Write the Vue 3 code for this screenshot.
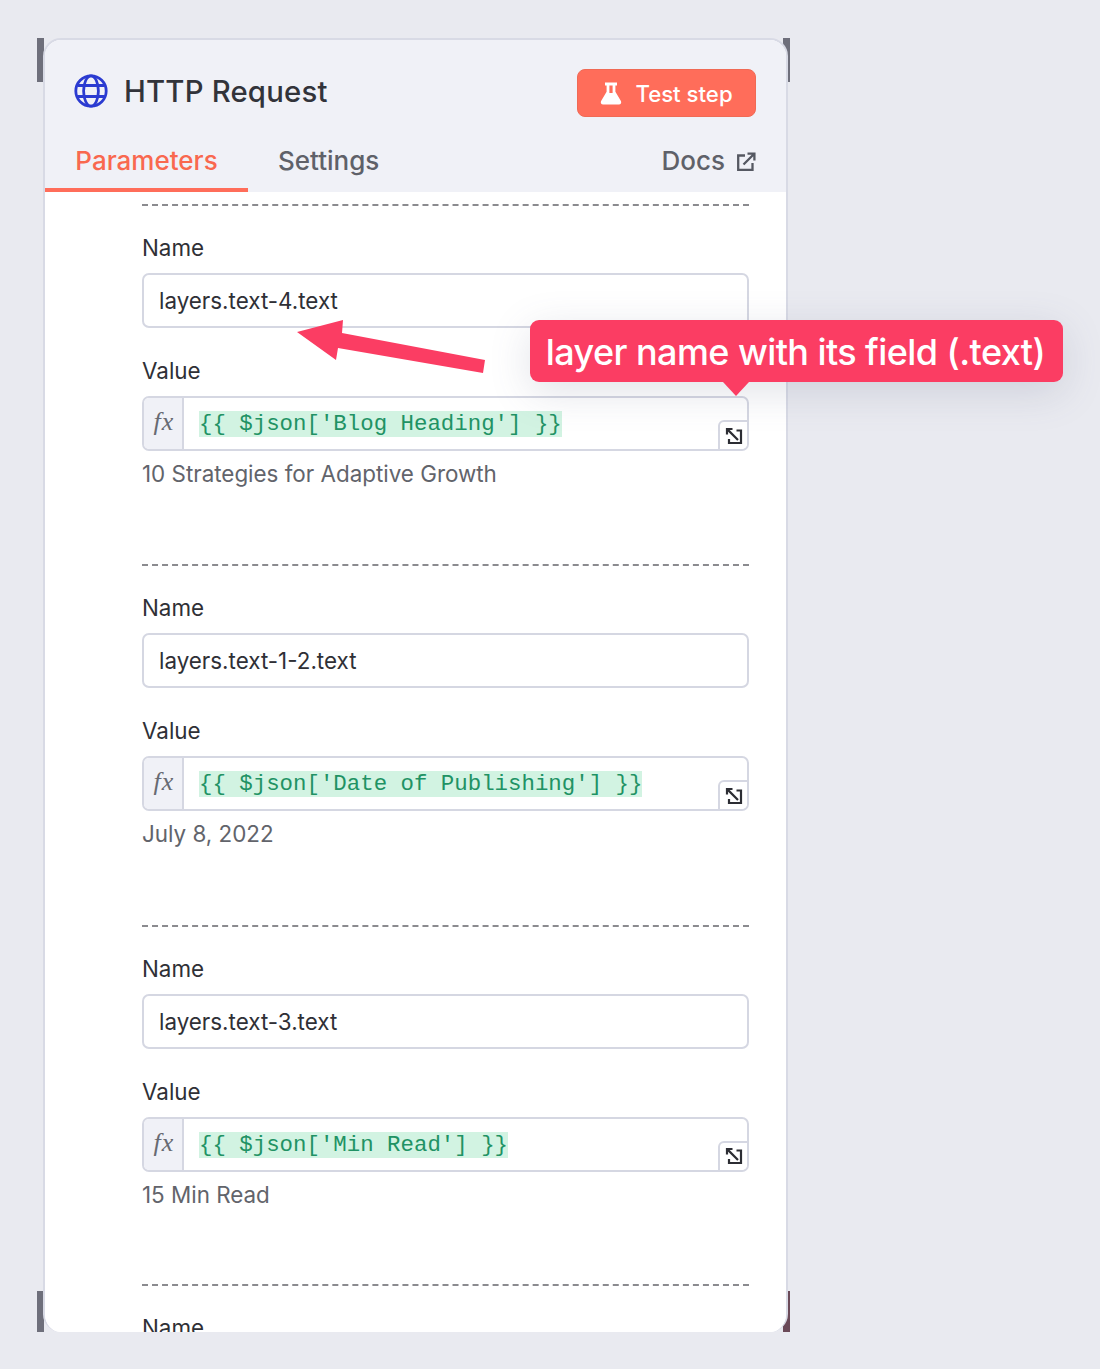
<script setup>
const sections = [
  { name: 'layers.text-4.text', value: "{{ $json['Blog Heading'] }}", hint: '10 Strategies for Adaptive Growth' },
  { name: 'layers.text-1-2.text', value: "{{ $json['Date of Publishing'] }}", hint: 'July 8, 2022' },
  { name: 'layers.text-3.text', value: "{{ $json['Min Read'] }}", hint: '15 Min Read' },
]
</script>

<template>
  <div class="page">
    <div class="frame">
      <span class="corner tl"></span>
      <span class="corner tr"></span>
      <span class="corner bl"></span>
      <span class="corner br"></span>
      <div class="card">
        <header class="head">
          <div class="title-row">
            <div class="title">
              <svg class="globe" width="34" height="34" viewBox="0 0 34 34" fill="none" stroke="#2b3bd1" stroke-width="2.8">
                <circle cx="17" cy="17" r="15.2" />
                <ellipse cx="17" cy="17" rx="7.4" ry="15.2" />
                <path d="M3.6 11.5h26.8M3.6 22.500h26.800" />
              </svg>
              <h1>HTTP Request</h1>
            </div>
            <button class="test">
              <svg width="22" height="24" viewBox="0 0 22 24" fill="#fff">
                <path fill-rule="evenodd" d="M5 1.500h12v3h-1.600v6.200l5.500 9.200c.9 1.600-.2 3.600-2 3.600H3.100c-1.800 0-2.900-2-2-3.600l5.500-9.200V4.500H5zM9.400 4.500v7.500h3.200V4.500z" />
              </svg>
              <span>Test step</span>
            </button>
          </div>
          <nav class="tabs">
            <a class="tab active">Parameters</a>
            <a class="tab">Settings</a>
            <a class="docs">
              <span>Docs</span>
              <svg class="ext" width="20" height="20" viewBox="0 0 20 20" fill="none" stroke="#555862" stroke-width="2.300">
                <path d="M9 3.500H2.200v14.300h14.300V11M7.500 12.500 18 2M11.500 1.600h6.900v6.900" />
              </svg>
            </a>
          </nav>
        </header>
        <main class="body">
          <section v-for="s in sections" :key="s.name" class="section">
            <label>Name</label>
            <div class="input">{{ s.name }}</div>
            <label class="value-label">Value</label>
            <div class="expr">
              <span class="fx">fx</span>
              <div class="code"><code>{{ s.value }}</code></div>
              <span class="expand">
                <svg width="18" height="18" viewBox="0 0 18 18" fill="none" stroke="#2c2d33" stroke-width="2.200">
                  <path d="M2 7.500V2h5.500M2.400 2.400 13 13M11.500 3.500H16v12.500H4v-4" />
                </svg>
              </span>
            </div>
            <p class="hint">{{ s.hint }}</p>
          </section>
          <section class="section"><label>Name</label></section>
        </main>
      </div>
      <svg class="arrow" width="192" height="56" viewBox="0 0 192 56">
        <path fill="#fb3d63" d="M2 14 48 2l-1 13 143 27-2 13-145-25-2 12z" />
      </svg>
      <div class="callout">layer name with its field (.text)</div>
    </div>
  </div>
</template>

<style>
html, body { margin: 0; background: #e9eaf0; }
</style>

<style scoped>
.page {
  height: 1369px;
  box-sizing: border-box;
  padding: 38px 0 0 43px;
  background: #e9eaf0;
  font-family: Inter, "Liberation Sans", sans-serif;
  overflow: hidden;
}
.frame { position: relative; width: 745px; height: 1294px; }
.corner { position: absolute; width: 7px; height: 44px; background: #6e6f7b; }
.corner.tl { left: -6px; top: 0; }
.corner.tr { right: -2px; top: 0; }
.corner.bl { left: -6px; bottom: 0; height: 41px; }
.corner.br { right: -2px; bottom: 0; height: 41px; background: #6b4a58; }
.card {
  position: relative;
  box-sizing: border-box;
  width: 745px;
  height: 1294px;
  overflow: hidden;
  background: #fff;
  border: 2px solid #d8dae5;
  border-bottom: none;
  border-radius: 18px;
}
.head { height: 152px; background: #f0f1f7; box-sizing: border-box; }
.title-row {
  display: flex;
  justify-content: space-between;
  align-items: flex-start;
  padding: 29px 30px 0 29px;
  height: 79px;
  box-sizing: border-box;
}
.title { display: flex; align-items: center; gap: 16px; height: 44px; }
.globe { flex: none; margin-top: -1px; }
h1 { margin: 0; font-size: 29.300px; font-weight: 500; color: #32333a; letter-spacing: 0.2px; }
.test {
  display: flex;
  align-items: center;
  justify-content: center;
  gap: 13px;
  width: 179px;
  height: 48px;
  padding: 0;
  border: 1px solid #f06a55;
  border-radius: 8px;
  background: #ff6d5a;
  color: #fff;
  font: 500 22.200px Inter, sans-serif;
}
.tabs { display: flex; align-items: stretch; height: 73px; padding-right: 30px; }
.tab {
  box-sizing: border-box;
  display: flex;
  align-items: center;
  justify-content: center;
  height: 73px;
  padding-top: 10px;
  font-size: 26px;
  font-weight: 500;
  color: #5f6169;
}
.tab.active {
  width: 203px;
  padding-top: 14px;
  color: #f9684f;
  border-bottom: 4px solid #ff6d5a;
}
.tab:not(.active) { margin-left: 30px; }
.docs {
  margin-left: auto;
  display: flex;
  align-items: center;
  gap: 11px;
  height: 73px;
  padding-top: 10px;
  box-sizing: border-box;
  font-size: 26px;
  font-weight: 500;
  color: #5f6169;
}
.ext { margin-top: 3px; }
.body { padding: 0 37px 0 97px; background: #fff; }
.section {
  border-top: 2px dashed #8b8b8f;
  padding-top: 27px;
  height: 360.400px;
  box-sizing: border-box;
}
.section:first-child { margin-top: 12px; }
.section:nth-child(3) { height: 359.600px; }
label { display: block; font-size: 22.400px; line-height: 30px; color: #2f3036; }
.input {
  margin-top: 10px;
  box-sizing: border-box;
  height: 55px;
  padding: 0 15px;
  display: flex;
  align-items: center;
  font-size: 22.400px;
  color: #2f3036;
  border: 2px solid #d5d7e2;
  border-radius: 7px;
  background: #fff;
}
.value-label { margin-top: 28px; }
.expr {
  position: relative;
  margin-top: 10px;
  box-sizing: border-box;
  height: 55px;
  display: flex;
  overflow: hidden;
  border: 2px solid #d5d7e2;
  border-radius: 7px;
}
.fx {
  flex: none;
  box-sizing: border-box;
  width: 40px;
  display: flex;
  align-items: center;
  justify-content: center;
  padding: 0 0 3px 2px;
  background: #f0f1f7;
  border-right: 2px solid #d5d7e2;
  font: italic 26px "Liberation Serif", serif;
  letter-spacing: 1px;
  color: #676a72;
}
.code { flex: 1; padding: 1px 0 0 15px; display: flex; align-items: center; }
code {
  font: 22.400px/26px "Liberation Mono", "DejaVu Sans Mono", monospace;
  color: #219264;
  background: #d2f3e2;
  white-space: pre;
}
.expand {
  position: absolute;
  right: -2px;
  bottom: -2px;
  box-sizing: border-box;
  width: 31px;
  height: 31px;
  display: flex;
  align-items: center;
  justify-content: center;
  background: #fff;
  border: 2px solid #d5d7e2;
  border-radius: 6px 0 0 0;
}
.hint { margin: 8px 0 0; font-size: 22.400px; line-height: 30px; color: #62646b; }
.arrow { position: absolute; left: 252px; top: 280px; }
.callout {
  position: absolute;
  left: 487px;
  top: 282px;
  box-sizing: border-box;
  width: 533px;
  height: 62px;
  padding: 2px 2px 0 0;
  display: flex;
  align-items: center;
  justify-content: center;
  background: #fb3d63;
  border-radius: 9px;
  color: #fff;
  font-size: 36px;
  font-weight: 500;
  letter-spacing: -0.580px;
  white-space: nowrap;
  box-shadow: 0 10px 40px rgba(90, 95, 130, 0.18);
}
.callout::after {
  content: "";
  position: absolute;
  left: 193px;
  bottom: -14px;
  width: 0;
  height: 0;
  border-left: 13px solid transparent;
  border-right: 13px solid transparent;
  border-top: 14px solid #fb3d63;
}
</style>
